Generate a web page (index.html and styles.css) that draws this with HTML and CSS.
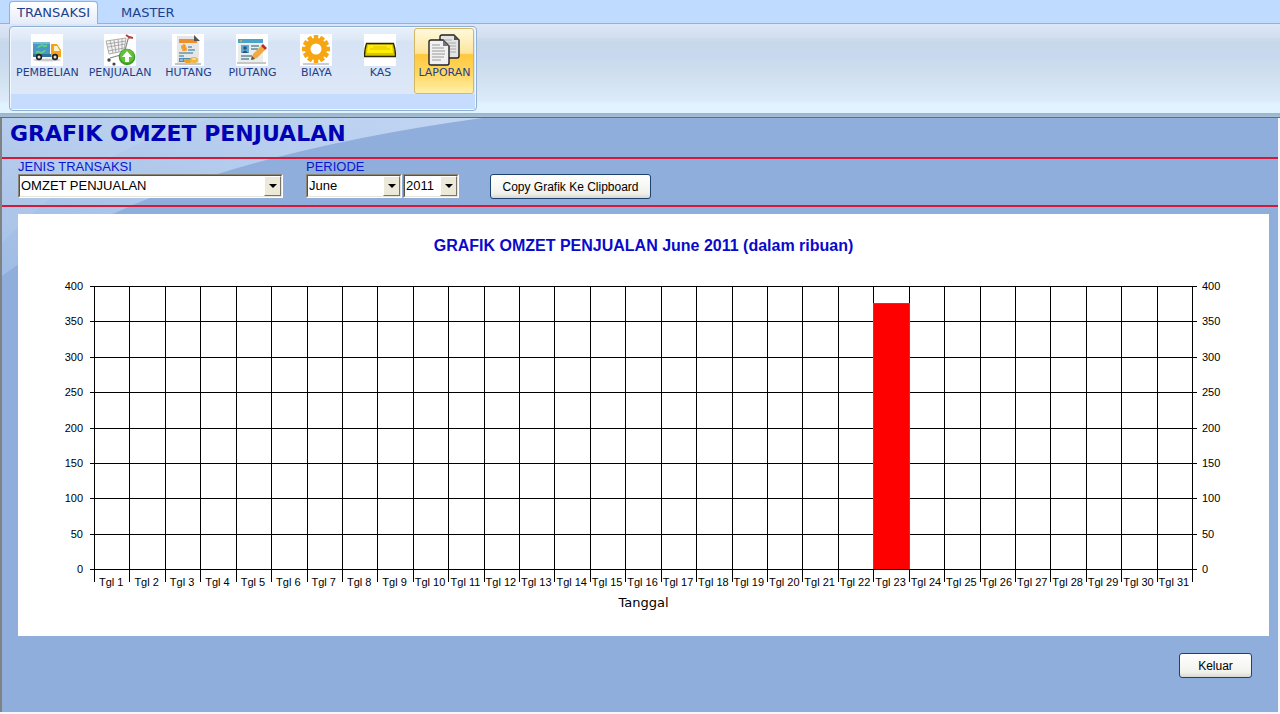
FILE: index.html
```
<!DOCTYPE html>
<html lang="id">
<head>
<meta charset="utf-8">
<title>Grafik Omzet Penjualan</title>
<link rel="stylesheet" href="styles.css">
</head>
<body>
<header class="ribbon">
  <nav class="tabs">
    <button class="tab tab-active" type="button">TRANSAKSI</button>
    <button class="tab" type="button">MASTER</button>
  </nav>
  <div class="ribbon-body">
    <div class="group">
      <div class="tools">
        <button class="tool" type="button">
          <svg class="icon" viewBox="0 0 32 32">
            <rect width="32" height="32" fill="#fff"/>
            <ellipse cx="16" cy="26" rx="14" ry="1.5" fill="#ccc"/>
            <path d="M2 8h17v15H2z" fill="#4798c6"/><path d="M2 8h17v2H2z" fill="#73b8d8"/><path d="M2 20h28v3H2z" fill="#34719a"/>
            <path d="M20 10h6l4 6v7H20z" fill="#f5a31d"/><path d="M23 12h3l3 5h-6z" fill="#fff1c8"/>
            <path d="M7 14a4 4 0 0 1 7-1M14 16a4 4 0 0 1-7 1" fill="none" stroke="#5ed07d" stroke-width="2"/>
            <path d="M12 13h4v-3zM9 17H5v3z" fill="#5ed07d"/>
            <circle cx="8" cy="23" r="3.2" fill="#222"/><circle cx="8" cy="23" r="1.5" fill="#ddd"/>
            <circle cx="24" cy="23" r="3.2" fill="#222"/><circle cx="24" cy="23" r="1.5" fill="#ddd"/>
          </svg>
          <span>PEMBELIAN</span>
        </button>
        <button class="tool" type="button">
          <svg class="icon" viewBox="0 0 32 32">
            <rect width="32" height="32" fill="#fff"/>
            <path d="M2 7l20-3-2 13L5 20z" fill="#f4f4f4"/>
            <path d="M2 7l20-3-2 13L5 20zM3 10l19-3M4 13l17-3M4 17l16-3M6 6l3 13M10 6l2 13M14 5l1 13M18 5v13" fill="none" stroke="#9a9a9a" stroke-width=".8"/>
            <path d="M27 3l-3 2-4 15-14 4" fill="none" stroke="#888" stroke-width="1.2"/>
            <path d="M22 1l3 2 4 1" fill="none" stroke="#b8403c" stroke-width="2"/>
            <circle cx="5" cy="26" r="1.7" fill="#444"/><circle cx="10" cy="30" r="1.6" fill="#444"/>
            <circle cx="23" cy="23" r="8.3" fill="#3b9d25"/><circle cx="23" cy="22" r="7" fill="#63bf3c"/>
            <path d="M23 17l5 6h-3v5h-4v-5h-3z" fill="#fff"/>
          </svg>
          <span>PENJUALAN</span>
        </button>
        <button class="tool" type="button">
          <svg class="icon" viewBox="0 0 32 32">
            <rect width="32" height="32" fill="#fff"/>
            <path d="M5 2h17l5 5v22H5z" fill="#e6e6e6"/><path d="M3 29h26v2H3z" fill="#c4c4c4"/>
            <path d="M7 5h18v4H7z" fill="#ee8f2f"/><path d="M22 1v6h6z" fill="#555"/>
            <path d="M14 12h-4v2h4v2h-4M12 10v7" fill="none" stroke="#f19a22" stroke-width="1.6"/>
            <path d="M16 13h4M16 16h7M7 19h14M7 22h5" stroke="#6695b2" stroke-width="1.3"/>
            <path d="M7 24h12v4H7z" fill="#4b8dbb"/><path d="M8 26h3M12 26h2" stroke="#dceaf2"/>
            <ellipse cx="16" cy="27" rx="4" ry="2" fill="#e9a522"/><ellipse cx="22" cy="26" rx="4" ry="3" fill="#f2b43a"/><ellipse cx="22" cy="25" rx="2" ry="1" fill="#ffe29a"/>
          </svg>
          <span>HUTANG</span>
        </button>
        <button class="tool" type="button">
          <svg class="icon" viewBox="0 0 32 32">
            <rect width="32" height="32" fill="#fff"/>
            <path d="M2 5h25v23H2z" fill="#e9edee"/><path d="M1 28h29v2H1z" fill="#c8c8c8"/>
            <path d="M2 5h25v4H2z" fill="#4ca3c9"/><circle cx="5" cy="7" r="1" fill="#f6a637"/>
            <path d="M5 11h8v8H5z" fill="#69a8ce"/><circle cx="9" cy="14" r="1.8" fill="#245780"/><path d="M6 19q3-5 6 0z" fill="#245780"/>
            <path d="M15 12h8M15 15h7M5 22h11M5 25h8" stroke="#60899c" stroke-width="1.4"/>
            <path d="M17 20l8-8 4 4-8 8-6 2z" fill="#f1aa3f"/><path d="M25 12l2-2 4 4-2 2z" fill="#bf292c"/><path d="M15 26l1-4 3 3z" fill="#684f30"/>
          </svg>
          <span>PIUTANG</span>
        </button>
        <button class="tool" type="button">
          <svg class="icon" viewBox="0 0 32 32">
            <rect width="32" height="32" fill="#fff"/>
            <path d="M3 30h26" stroke="#ccc" stroke-width="2"/>
            <g fill="none" stroke="#f6a612"><circle cx="16" cy="15" r="8" stroke-width="6"/>
            <path d="M16 1v28M2 15h28M9 3l14 24M4 8l24 14M4 22L28 8M9 27L23 3" stroke-width="4.5"/></g>
            <circle cx="16" cy="15" r="5.5" fill="#fff"/>
          </svg>
          <span>BIAYA</span>
        </button>
        <button class="tool" type="button">
          <svg class="icon" viewBox="0 0 32 32">
            <rect width="32" height="32" fill="#fff"/>
            <path d="M2.500 9.500h27q2 6 2 13h-31q0-7 2-13z" fill="#d8c500" stroke="#292600" stroke-width="1.300"/>
            <path d="M4 11h24l1 8H3z" fill="#fff000"/><path d="M6 15h20M9 13h14" stroke="#e0c000"/>
          </svg>
          <span>KAS</span>
        </button>
        <button class="tool tool-active" type="button">
          <svg class="icon" viewBox="0 0 32 32">
            <path d="M14 1h12l5 5v16q0 2-2 2H14q-2 0-2-2V3q0-2 2-2z" fill="#e4e4e4" stroke="#222" stroke-width="1.400"/>
            <path d="M26 1v5h5z" fill="#555"/><path d="M15 6h9M15 9h13M15 12h13M22 15h6M22 18h6" stroke="#aaa"/>
            <path d="M3 6h12l6 6v17q0 2-2 2H3q-2 0-2-2V8q0-2 2-2z" fill="#f1f1f1" stroke="#222" stroke-width="1.400"/>
            <path d="M15 6v6h6z" fill="#777"/><path d="M4 11h8M4 14h12M4 17h13M4 20h13M4 23h12M4 26h9" stroke="#999"/>
          </svg>
          <span>LAPORAN</span>
        </button>
      </div>
      <div class="group-caption"></div>
    </div>
  </div>
</header>

<main class="page">
  <svg class="swoosh" viewBox="0 0 480 160" aria-hidden="true">
    <defs><linearGradient id="sheen" x1="1" y1="0" x2="0" y2="1"><stop offset="0" stop-color="#c2d6f3"/><stop offset="1" stop-color="#9fbce4"/></linearGradient></defs>
    <path d="M0 0H480Q250 32 115 94Q45 124 0 158Z" fill="url(#sheen)"/>
    <path d="M0 0H210Q90 30 0 125Z" fill="#fff" opacity=".08"/>
  </svg>
  <h1 class="page-title">GRAFIK OMZET PENJUALAN</h1>
  <form class="filters">
    <div class="field field-type">
      <label for="jenis">JENIS TRANSAKSI</label>
      <div class="combo">
        <select id="jenis"><option>OMZET PENJUALAN</option></select>
        <span class="drop"></span>
      </div>
    </div>
    <div class="field">
      <label for="bulan">PERIODE</label>
      <div class="period">
        <div class="combo combo-month">
          <select id="bulan"><option>June</option></select>
          <span class="drop"></span>
        </div>
        <div class="combo combo-year">
          <select aria-label="Tahun"><option>2011</option></select>
          <span class="drop"></span>
        </div>
      </div>
    </div>
    <button class="btn" type="button">Copy Grafik Ke Clipboard</button>
  </form>

  <section class="chart">
    <h2 class="chart-title">GRAFIK OMZET PENJUALAN June 2011 (dalam ribuan)</h2>
    <div class="chart-body">
      <div class="scale scale-left"><span>400</span><span>350</span><span>300</span><span>250</span><span>200</span><span>150</span><span>100</span><span>50</span><span>0</span></div>
      <div class="plot">
        <div class="rows"><i></i><i></i><i></i><i></i><i></i><i></i><i></i><i></i></div>
        <div class="days">
          <div class="day"><span>Tgl 1</span></div>
          <div class="day"><span>Tgl 2</span></div>
          <div class="day"><span>Tgl 3</span></div>
          <div class="day"><span>Tgl 4</span></div>
          <div class="day"><span>Tgl 5</span></div>
          <div class="day"><span>Tgl 6</span></div>
          <div class="day"><span>Tgl 7</span></div>
          <div class="day"><span>Tgl 8</span></div>
          <div class="day"><span>Tgl 9</span></div>
          <div class="day"><span>Tgl 10</span></div>
          <div class="day"><span>Tgl 11</span></div>
          <div class="day"><span>Tgl 12</span></div>
          <div class="day"><span>Tgl 13</span></div>
          <div class="day"><span>Tgl 14</span></div>
          <div class="day"><span>Tgl 15</span></div>
          <div class="day"><span>Tgl 16</span></div>
          <div class="day"><span>Tgl 17</span></div>
          <div class="day"><span>Tgl 18</span></div>
          <div class="day"><span>Tgl 19</span></div>
          <div class="day"><span>Tgl 20</span></div>
          <div class="day"><span>Tgl 21</span></div>
          <div class="day"><span>Tgl 22</span></div>
          <div class="day"><div class="bar" style="height:94%"></div><span>Tgl 23</span></div>
          <div class="day"><span>Tgl 24</span></div>
          <div class="day"><span>Tgl 25</span></div>
          <div class="day"><span>Tgl 26</span></div>
          <div class="day"><span>Tgl 27</span></div>
          <div class="day"><span>Tgl 28</span></div>
          <div class="day"><span>Tgl 29</span></div>
          <div class="day"><span>Tgl 30</span></div>
          <div class="day"><span>Tgl 31</span></div>
        </div>
      </div>
      <div class="scale"><span>400</span><span>350</span><span>300</span><span>250</span><span>200</span><span>150</span><span>100</span><span>50</span><span>0</span></div>
    </div>
    <p class="axis-title">Tanggal</p>
  </section>
  <footer class="actions"><button class="btn btn-exit" type="button">Keluar</button></footer>
</main>
</body>
</html>
```
FILE: styles.css
```
* { box-sizing: border-box; }

body {
  margin: 0;
  min-height: 100vh;
  display: flex;
  flex-direction: column;
  background: #f4f7fb;
  font-family: "Liberation Sans", Arial, sans-serif;
  color: #000;
}

button, select { font: inherit; color: inherit; margin: 0; }

/* Ribbon */
.ribbon {
  background: #bfdbff;
  font-family: "DejaVu Sans", Verdana, sans-serif;
  color: #1f3f8c;
  border-bottom: 1px solid #6e6e60;
}

.tabs {
  display: flex;
  gap: 16px;
  height: 24px;
  padding: 1px 0 0 9px;
  border-bottom: 1px solid #8db2e3;
}

.tab {
  height: 23px;
  padding: 0 7px;
  border: 1px solid transparent;
  border-bottom: 0;
  background: none;
  font-size: 13px;
  line-height: 20px;
}

.tab + .tab { padding: 0 6px; }

.tab-active {
  border-color: #8db2e3;
  border-radius: 4px 4px 0 0;
  background: linear-gradient(#fff, #e4ecf9);
}

.ribbon-body {
  height: 93px;
  padding: 2px 0 0 9px;
  background: linear-gradient(#dce6f6 0, #d3e0ef 12px, #c7d8ea 18px, #c7d9ef 32px, #d0e0ee 52px, #dceafa 76px, #e1f3ff 80px, #e1f3ff 89px, #92b6d2 89px, #a9bed0 100%);
}

.group {
  display: inline-flex;
  flex-direction: column;
  height: 85px;
  padding: 1px;
  border: 1px solid #8fb0d0;
  border-radius: 4px;
  background: linear-gradient(#e8f0fb 0, #dfe9f6 12px, #d6e3f5 15px, #dfe9f8 100%);
  box-shadow: inset 0 0 0 1px #f3f8ff;
}

.tools { display: flex; flex: 1; padding-right: 1px; }

.tool {
  display: flex;
  flex-direction: column;
  align-items: center;
  gap: 1px;
  min-width: 64px;
  height: 66px;
  padding: 5px 4px 0;
  border: 1px solid transparent;
  border-radius: 3px;
  background: none;
  font-size: 11px;
  line-height: 12px;
}

.tool-active {
  min-width: 60px;
  margin-left: 2px;
  padding: 5px 2px 0;
  border-color: #d3b765;
  background: linear-gradient(#fff9dc, #fde59c 38%, #ffc83c 40%, #ffd764 70%, #fff0a8);
}

.icon { display: block; width: 32px; height: 32px; flex: none; }

.group-caption { height: 15px; background: #c5dcff; }

/* Page */
.page {
  position: relative;
  flex: 1;
  margin: 0 2px 2px 0;
  border-left: 2px solid #7f8284;
  background: #8faedb;
}

.swoosh { position: absolute; left: 0; top: 0; width: 480px; height: 160px; }

.page-title, .filters, .chart, .actions { position: relative; }

.page-title {
  margin: 0;
  padding: 0 8px;
  height: 39px;
  font-family: "DejaVu Sans", "Arial Black", sans-serif;
  font-size: 22px;
  font-weight: bold;
  line-height: 32px;
  color: #0000b4;
}

.filters {
  display: flex;
  align-items: flex-start;
  height: 50px;
  padding: 0 16px;
  border: solid #d01c38;
  border-width: 2px 0;
}

.field { margin-right: 31px; }
.field-type { width: 265px; margin-right: 23px; }

.field label {
  display: block;
  height: 15px;
  font-size: 13px;
  line-height: 15px;
  color: #0c14d4;
}

.period { display: flex; gap: 1px; }

.combo {
  display: grid;
  height: 24px;
  border: 1px solid;
  border-color: #8a8778 #fff #fff #8a8778;
  background: #fff;
}

.combo select, .drop { grid-area: 1 / 1; }

.combo select {
  appearance: none;
  width: 100%;
  height: 22px;
  padding: 0 0 0 1px;
  border: 1px solid;
  border-color: #55534a #e8e5d8 #e8e5d8 #55534a;
  border-radius: 0;
  background: #fff;
  font-size: 13px;
  line-height: 18px;
}

.combo-month { width: 96px; }
.combo-year { width: 56px; }

.drop {
  display: grid;
  place-items: center;
  justify-self: end;
  width: 17px;
  margin: 1px;
  border: 1px solid;
  border-color: #fff #77746a #77746a #fff;
  background: #ece9d8;
  pointer-events: none;
}

.drop::after {
  content: "";
  border: 4px solid transparent;
  border-top-color: #000;
  border-bottom: 0;
}

.btn {
  width: 161px;
  height: 25px;
  padding: 0;
  border: 1px solid #1c4370;
  border-radius: 3px;
  background: linear-gradient(#fff, #f1f1ec 80%, #d9d7ce);
  font-size: 12px;
}

.filters .btn { margin-top: 15px; }

/* Chart */
.chart {
  margin: 7px 9px 0 16px;
  padding: 21px 0 24px;
  background: #fff;
}

.chart-title {
  margin: 0 0 29px;
  font-size: 16px;
  line-height: 22px;
  text-align: center;
  color: #0a0acb;
}

.chart-body {
  display: grid;
  grid-template-columns: 76px 1fr 76px;
  font-size: 11px;
  line-height: 12px;
}

.scale {
  display: flex;
  flex-direction: column;
  justify-content: space-between;
  height: 295px;
  margin-top: -6px;
  padding-left: 9px;
}

.scale-left { padding: 0 11px 0 0; text-align: right; }

.plot { display: grid; }
.rows, .days { grid-area: 1 / 1; }

.rows {
  display: flex;
  flex-direction: column;
  height: 284px;
  margin: 0 -4px;
  border-bottom: 1px solid #000;
}

.rows i { flex: 1; border-top: 1px solid #000; }

.days {
  display: flex;
  height: 296px;
  border-right: 1px solid #000;
}

.day {
  flex: 1 1 0;
  min-width: 0;
  display: grid;
  grid-template-rows: 283px 13px;
  border-left: 1px solid #000;
}

.day span {
  grid-row: 2;
  padding-right: 2px;
  line-height: 26px;
  text-align: center;
  white-space: nowrap;
}

.bar {
  grid-row: 1;
  align-self: end;
  z-index: 1;
  margin: 0 -1px;
  border: 1px solid #8540a8;
  border-bottom: 0;
  background: #f00;
}

.axis-title {
  margin: 12px 0 0;
  font-family: "DejaVu Sans", Verdana, sans-serif;
  font-size: 13px;
  line-height: 18px;
  text-align: center;
}

.actions {
  display: flex;
  justify-content: flex-end;
  padding: 17px 26px 33px;
}

.btn-exit { width: 73px; }
```
